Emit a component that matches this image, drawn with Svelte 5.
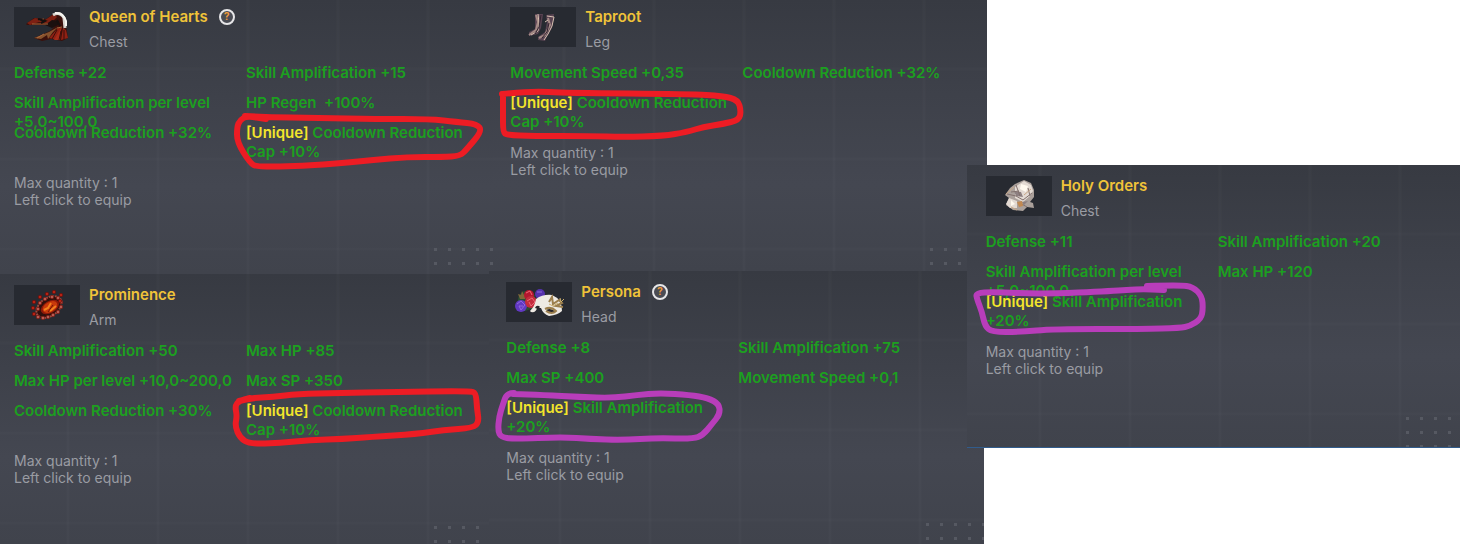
<script>

	const columns = [
		{
			place: 'first',
			items: [
				{
					name: 'Queen of Hearts', slot: 'Chest', art: 'coat', help: true,
					stats: [
						{ text: 'Defense +22' },
						{ text: 'Skill Amplification +15' },
						{ text: 'Skill Amplification per level +5,0~100,0' },
						{ text: 'HP Regen \u00a0+100%' },
						{ text: 'Cooldown Reduction +32%' },
						{
							text: 'Cooldown Reduction Cap +10%', mark: 'red',
							points: [[-1,-7],[20,-6],[70,-5],[131,-4],[184,-4],[211,-1],[231,1],[236,8],[221,26],[214,33],[197,34],[161,34],[127,37],[97,40],[57,43],[11,44],[4,40],[-9,19],[-9,4],[-6,-3],[1,-7],[20,-4]]
						}
					]
				},
				{
					name: 'Prominence', slot: 'Arm', art: 'bracelet',
					stats: [
						{ text: 'Skill Amplification +50' },
						{ text: 'Max HP +85' },
						{ text: 'Max HP per level +10,0~200,0' },
						{ text: 'Max SP +350' },
						{ text: 'Cooldown Reduction +30%' },
						{
							text: 'Cooldown Reduction Cap +10%', mark: 'red',
							points: [[-7,0],[4,-3],[27,-4],[51,-7],[94,-8],[144,-9],[224,-10],[230,-8],[231,8],[233,21],[227,27],[197,29],[171,33],[124,36],[97,38],[64,39],[34,42],[4,43],[-6,37],[-11,25],[-9,15],[-11,5],[-7,0],[4,-3]]
						}
					]
				}
			]
		},
		{
			place: 'second',
			items: [
				{
					name: 'Taproot', slot: 'Leg', art: 'boots',
					stats: [
						{ text: 'Movement Speed +0,35' },
						{ text: 'Cooldown Reduction +32%' },
						{
							text: 'Cooldown Reduction Cap +10%', mark: 'red',
							points: [[-8,1],[20,-2],[57,0],[180,1],[213,3],[228,7],[231,18],[229,27],[213,31],[193,34],[177,39],[153,43],[113,44],[80,43],[23,43],[-3,42],[-7,39],[-7,19],[-7,2]]
						}
					]
				},
				{
					name: 'Persona', slot: 'Head', art: 'mask', help: true,
					stats: [
						{ text: 'Defense +8' },
						{ text: 'Skill Amplification +75' },
						{ text: 'Max SP +400' },
						{ text: 'Movement Speed +0,1' },
						{
							text: 'Skill Amplification +20%', mark: 'purple',
							points: [[8,-5],[1,-5],[-3,6],[-7,19],[-8,33],[-5,39],[7,41],[57,39],[84,41],[117,42],[151,40],[187,41],[197,37],[206,26],[214,16],[213,6],[202,0],[184,-3],[154,-5],[131,-3],[107,0],[74,-1],[37,-3],[7,-4]]
						}
					]
				}
			]
		},
		{
			place: 'third',
			items: [
				{
					name: 'Holy Orders', slot: 'Chest', art: 'robe',
					stats: [
						{ text: 'Defense +11' },
						{ text: 'Skill Amplification +20' },
						{ text: 'Skill Amplification per level +5,0~100,0' },
						{ text: 'Max HP +120' },
						{
							text: 'Skill Amplification +20%', mark: 'purple',
							points: [[161,-6],[194,-7],[207,-5],[216,4],[217,17],[215,27],[204,34],[194,36],[157,37],[67,37],[34,40],[6,40],[-1,34],[-4,20],[-9,7],[-10,1],[7,0],[57,2],[127,-1],[154,-3],[178,-2]]
						}
					]
				}
			]
		}
	];

	// rounds the corners of a hand drawn line by curving between midpoints
	function smooth(points) {
		let d = `M${points[0]}`;
		for (let i = 1; i < points.length - 1; i++) {
			const [x, y] = points[i];
			const [nx, ny] = points[i + 1];
			d += ` Q${x} ${y} ${(x + nx) / 2} ${(y + ny) / 2}`;
		}
		return d + ` L${points[points.length - 1]}`;
	}

	const beads = [[19,23],[20,17],[26,12],[33,9],[40,7],[47,10],[46,16],[20,29]];
	const studs = [[24,32],[29,33],[34,32],[39,30],[44,27],[47,22],[47,17],[44,13],[38,12],[31,14],[26,18],[24,24]];

</script>

<main class="board">
	{#each columns as column}
		<div class="column {column.place}">
			{#each column.items as item}
				<article class="card">
					<div class="dots"></div>

					<header>
						<svg class="art" viewBox="0 0 66 40" aria-hidden="true">
							{#if item.art === 'coat'}
								<path fill="#3b100b" d="M12 17 L20 11 L32 12 L41 6 L51 12 L54 31 L48 34 L37 32 L28 34 L20 31 L36 24 L42 18 L30 18 L13 18Z"/>
								<path fill="#7d2013" d="M13 16 L21 11 L31 13 L40 7 L43 10 L36 17 L25 15 L16 18Z"/>
								<path fill="#1b100f" d="M31 18 L38 13 L45 14 L44 18 L38 21Z"/>
								<path fill="#8f2114" d="M35 31 L44 21 L48 21 L43 33Z M47 33 L49 21 L52 23 L54 31Z"/>
								<path fill="#a52a18" d="M40 33 L47 21 L46 33Z"/>
								<path fill="#85522d" d="M20 31 L35 25 L44 20 L39 25 L34 32 L33 28 L27 32Z"/>
								<path fill="none" stroke="#d7d4ce" stroke-width="3" d="M39 8 Q46 4 50 11 L51 21"/>
								<path fill="none" stroke="#f6f5f1" stroke-width="2" d="M41 6 Q49 5 52 14 L52 19"/>
								<path fill="none" stroke="#a8683d" d="M18 17 L34 17 M43 21 L48 20 M23 31 L30 27 M25 13 L30 12"/>
								<path fill="none" stroke="#16100f" stroke-width="2" d="M24 12 L31 14 L27 16 M43 13 L46 19"/>
								<path fill="none" stroke="#3a0e0a" d="M43 23 L38 32 M47 24 L45 33 M50 23 L50 33"/>
							{:else if item.art === 'bracelet'}
								<ellipse cx="35" cy="22" rx="14" ry="9" transform="rotate(-35 35 22)" fill="#31100d" stroke="#9b4b40" stroke-width="2" stroke-dasharray="2 1"/>
								{#each studs as [x, y]}
									<circle cx={x} cy={y} r="2" fill="#8d241c"/>
									<circle cx={x} cy={y} r="1" fill="#c57067"/>
								{/each}
								{#each beads as [x, y]}
									<circle cx={x} cy={y} r="2" fill="#7c110b"/>
									<circle cx={x} cy={y} r="1" fill="#cb2a18"/>
								{/each}
								<ellipse cx="36" cy="22" rx="10" ry="6" transform="rotate(-30 36 22)" fill="#8e1909"/>
								<ellipse cx="36" cy="22" rx="8" ry="5" transform="rotate(-30 36 22)" fill="#c9390b"/>
								<path fill="none" stroke="#f4811f" stroke-width="2" d="M30 25 L34 23 L37 18 M36 26 L42 21"/>
								<path fill="none" stroke="#6e1708" d="M34 27 L39 20"/>
							{:else if item.art === 'boots'}
								<path fill="#584352" d="M25 7 L33 7 L31 21 L28 27 L19 29 L19 25 L25 22Z M36 8 L44 7 L42 21 L37 29 L35 34 L28 33 L28 30 L35 25 L37 15Z"/>
								<path fill="none" stroke="#a58a86" stroke-width="2" d="M26 8 L28 15 L26 23 L19 28 M38 11 L40 18 L35 28 L29 31"/>
								<path fill="none" stroke="#d8c1b2" d="M28 7 L29 16 L28 24 L21 28 M37 9 L44 10 L42 19 L38 27 L34 33 M35 15 L38 13"/>
								<path fill="none" stroke="#30222e" d="M31 8 L29 20 L25 27 M39 16 L37 25 L32 31"/>
							{:else if item.art === 'mask'}
								<path fill="#285033" d="M13 13 L18 9 L29 13 L28 26 L19 29 L11 22Z"/>
								<path fill="#806739" d="M12 12 L15 13 L16 9 L18 13 L21 11 L19 17 L14 17Z"/>
								<circle cx="34" cy="12" r="5" fill="#5532ad"/>
								<circle cx="15" cy="24" r="6" fill="#6239c3"/>
								<circle cx="23" cy="13" r="5" fill="#b5162f"/>
								<circle cx="25" cy="20" r="6" fill="#c42b3d"/>
								<path fill="none" stroke="#9168dc" d="M11 22 L15 19 L19 23 L15 28 L13 24 L17 24 M31 10 L36 10"/>
								<path fill="none" stroke="#ed6875" d="M20 11 L24 9 L26 13 M21 19 L26 16 L29 20 L25 24 L23 20"/>
								<path fill="#eeeae3" d="M24 29 Q29 24 30 17 Q37 12 46 13 Q56 17 56 29 Q52 33 43 34 Q37 32 35 26 L31 26 Q30 31 25 30Z"/>
								<path fill="#28262a" d="M29 26 Q30 23 33 24 Q35 25 32 27Z M40 28 Q45 25 50 30 Q43 31 40 28Z"/>
								<path fill="none" stroke="#9c7f4d" stroke-width="2" d="M39 27 Q45 24 50 29 Q46 33 40 29 M43 20 L46 15 L47 22 L53 18 L56 21 L50 24 L57 25"/>
								<path fill="none" stroke="#cdb06e" d="M43 22 L47 24 L52 21 M54 16 L55 20 L58 17"/>
							{:else}
								<path fill="#aaa09b" d="M19 19 L24 12 L29 8 L38 4 L45 7 L48 14 L48 21 L44 26 L47 27 L48 32 L41 31 L37 35 L27 34 L20 29 L23 22Z"/>
								<path fill="#e3dad3" d="M29 11 L38 5 L45 9 L47 15 L44 20 L37 26 L29 22Z M23 22 L31 25 L31 32 L24 32 L20 28Z"/>
								<path fill="#fff9ef" d="M35 8 L42 10 L40 16 L34 13Z M25 24 L29 28 L25 30Z"/>
								<path fill="#8c7f80" d="M28 15 L35 16 L37 21 L30 20Z M36 26 L42 25 L38 29Z"/>
								<path fill="none" stroke="#81706d" d="M21 18 L30 20 L37 24 L46 17 M30 9 L34 20 M25 16 L33 15 M34 27 L41 31 M42 12 L44 20"/>
								<path fill="none" stroke="#c8a888" d="M20 18 L28 11 M38 19 L45 13 M25 31 L31 34"/>
								<path fill="#c28952" d="M31 26 L36 25 L37 30 L33 31Z"/>
							{/if}
						</svg>

						<div class="title">
							<h2>
								{item.name}
								{#if item.help}
									<button type="button" class="help" aria-label="About {item.name}">?</button>
								{/if}
							</h2>
							<p class="slot">{item.slot}</p>
						</div>
					</header>

					<ul class="stats">
						{#each item.stats as stat}
							<li>
								{#if stat.mark}
									<span class="unique">[Unique]</span>
								{/if}
								{stat.text}
								{#if stat.mark}
									<svg class="mark {stat.mark}" aria-hidden="true">
										<path d={smooth(stat.points)}/>
									</svg>
								{/if}
							</li>
						{/each}
					</ul>

					<p class="notes">Max quantity : 1<br>Left click to equip</p>
				</article>
			{/each}
		</div>
	{/each}
</main>

<style>

	:global(body) {
		margin: 0;
		background: #fff;
	}

	.board {
		display: flex;
		align-items: flex-start;
		font-family: Inter, Roboto, sans-serif;
	}

	.column {
		flex: 1 1 0;
		min-width: 0;
		display: flex;
		flex-direction: column;
	}

	/* the third column laps over the edge of the second */
	.third {
		margin-top: 165px;
		margin-left: -20px;
		position: relative;
	}

	.card {
		--left: 14px;
		--top: 11px;
		position: relative;
		box-sizing: border-box;
		min-height: 270px;
		padding: var(--top) 10px 0 var(--left);
		background:
			repeating-linear-gradient(90deg, transparent 0 52px, #ffffff04 53px 55px, transparent 56px 90px) var(--left) 0,
			repeating-linear-gradient(transparent 0 67px, #ffffff03 68px 70px, transparent 71px 90px),
			linear-gradient(#373a42, #3e414a 35%, #444751 68%, #40434c);
	}

	.first .card:first-child {
		--top: 7px;
		min-height: 274px;
	}

	.second .card {
		--left: 17px;
		min-height: 273px;
	}

	.second .card:first-child {
		--top: 7px;
		min-height: 271px;
	}

	.second .card:last-child {
		margin: 0 3px 0 -4px;
	}

	.third .card {
		--left: 19px;
		min-height: 283px;
		border-bottom: 1px solid #315c8c;
	}

	.dots {
		position: absolute;
		left: calc(var(--left) + 420px);
		right: 0;
		top: calc(var(--top) + 241px);
		bottom: 0;
		background: conic-gradient(from 90deg at 11px 11px, #565962 90deg, transparent 0) -11px -11px / 14px 14px;
	}

	header {
		display: flex;
		gap: 9px;
	}

	.art {
		flex: none;
		width: 66px;
		height: 40px;
		background: #272a31;
	}

	.title {
		display: flex;
		flex-direction: column;
		gap: 5px;
	}

	h2 {
		display: flex;
		align-items: center;
		gap: 11px;
		margin: 0;
		color: #f0c339;
		font-size: 15px;
		font-weight: 600;
		line-height: 20px;
	}

	.help {
		width: 16px;
		height: 16px;
		padding: 0;
		border: 2px solid #e6e6e8;
		border-radius: 50%;
		background: #4a4c54;
		color: #ee9a3c;
		font: bold 11px/12px Roboto, sans-serif;
		cursor: pointer;
	}

	.slot {
		margin: 0;
		color: #9a9ca3;
		font-size: 14px;
		line-height: 20px;
	}

	.stats {
		display: grid;
		grid-template-columns: 1fr 1fr;
		grid-auto-rows: 30px;
		max-width: 464px;
		margin: 11px 0 0;
		padding: 0;
		list-style: none;
		color: #1ca01f;
		font-size: 15px;
		font-weight: 600;
		line-height: 19px;
	}

	li {
		position: relative;
	}

	.unique {
		color: #f2e52b;
	}

	.mark {
		position: absolute;
		left: 0;
		top: 0;
		width: 232px;
		height: 38px;
		overflow: visible;
		fill: none;
		stroke-width: 6px;
		stroke-linecap: round;
		stroke-linejoin: round;
		pointer-events: none;
	}

	.red {
		stroke: #ed1c24;
	}

	.purple {
		stroke: #b83dba;
	}

	.notes {
		margin: 21px 0 0;
		color: #9a9ca3;
		font-size: 14px;
		line-height: 17px;
	}

</style>
